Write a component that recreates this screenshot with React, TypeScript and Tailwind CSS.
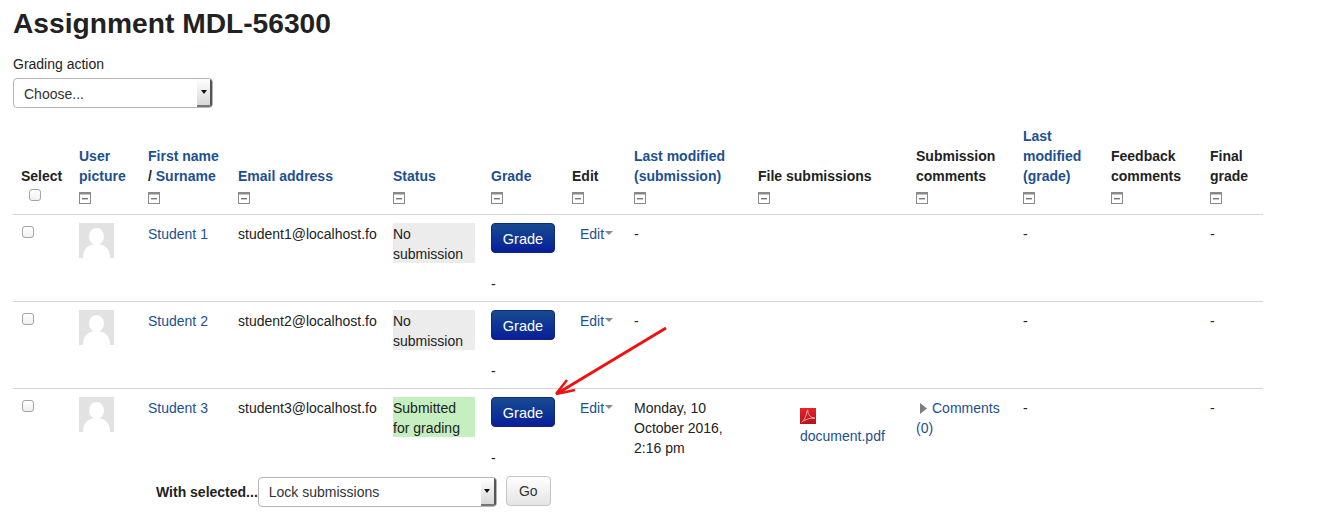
import React from 'react';

const linkClass = 'text-[#1d4f91]';

// widths come from the column left edges in the screenshot
const colWidths = [
  'w-[58px]', 'w-[69px]', 'w-[90px]', 'w-[155px]', 'w-[98px]', 'w-[81px]', 'w-[62px]',
  'w-[124px]', 'w-[158px]', 'w-[107px]', 'w-[88px]', 'w-[99px]', 'w-[61px]',
];

const CollapseIcon = () => (
  <svg width="12" height="12" viewBox="0 0 12 12" className="block mt-[6px]">
    <rect x="0.5" y="0.5" width="11" height="11" fill="#fff" stroke="#8a8a8a" />
    <rect x="0.5" y="0.5" width="11" height="2" fill="#8a8a8a" />
    <rect x="3" y="6" width="6" height="1.4" fill="#777" />
  </svg>
);

const Checkbox = ({ className = '' }: { className?: string }) => (
  <span className={`block w-[12px] h-[12px] rounded-[3px] border border-[#a3a3a3] bg-gradient-to-b from-white to-[#f0f0f0] ${className}`} />
);

const Avatar = () => (
  <svg width="35" height="35" viewBox="0 0 35 35" className="block">
    <rect width="35" height="35" fill="#e2e2e2" />
    <ellipse cx="17.5" cy="13.5" rx="7.5" ry="8.5" fill="#fff" />
    <path d="M4 35c0-9 5-14 13.5-14S31 26 31 35z" fill="#fff" />
  </svg>
);

const PdfIcon = () => (
  <svg width="16" height="16" viewBox="0 0 16 16" className="block">
    <defs>
      <linearGradient id="pdfRed" x1="0" y1="0" x2="0" y2="1">
        <stop offset="0" stopColor="#e8232a" />
        <stop offset="1" stopColor="#b5121b" />
      </linearGradient>
    </defs>
    <rect width="16" height="16" fill="url(#pdfRed)" />
    <path d="M1.500 14.500C4 12.500 6.500 8 7 3c.2-1.400 1-1 .9.3C7.700 6 10 9.500 15 10.200c-4-.6-9 1-11.500 3" fill="none" stroke="#f3c4c4" strokeWidth="0.8" />
  </svg>
);

const SelectBox = ({ label, width, textLeading = 'leading-[29px]' }: { label: string; width: string; textLeading?: string }) => (
  <div className={`${width} h-[30px] flex bg-white border border-[#b5b5b5] rounded-[4px] overflow-hidden`}>
    <span className={`flex-1 pl-[10px] text-[14px] text-[#333] ${textLeading}`}>{label}</span>
    <span className="w-[15px] flex items-center justify-center bg-gradient-to-b from-white to-[#d8d8d8] border-r-2 border-b-2 border-r-[#555] border-b-[#777]">
      <svg width="6" height="4" viewBox="0 0 6 4"><path d="M0 0h6L3 4z" fill="#111" /></svg>
    </span>
  </div>
);

const GradeButton = () => (
  <span className="block w-[64px] h-[30px] rounded-[4px] border border-[#0d2a77] bg-gradient-to-b from-[#1a4a90] to-[#0c1a9a] text-white text-center leading-[31px] text-[14.500px]">
    Grade
  </span>
);

const Caret = () => (
  <svg width="8" height="4" viewBox="0 0 8 4" className="inline-block ml-[1px] mb-[5px]">
    <path d="M0 0h8L4 4z" fill="#8a8a8a" />
  </svg>
);

const headers: { lines: React.ReactNode[]; link?: boolean; select?: boolean }[] = [
  { lines: ['Select'], select: true },
  { lines: ['User', 'picture'], link: true },
  { lines: ['First name', <><span className="text-[#222]">/</span> Surname</>], link: true },
  { lines: ['Email address'], link: true },
  { lines: ['Status'], link: true },
  { lines: ['Grade'], link: true },
  { lines: ['Edit'] },
  { lines: ['Last modified', '(submission)'], link: true },
  { lines: ['File submissions'] },
  { lines: ['Submission', 'comments'] },
  { lines: ['Last', 'modified', '(grade)'], link: true },
  { lines: ['Feedback', 'comments'] },
  { lines: ['Final', 'grade'] },
];

const students = [
  { name: 'Student 1', email: 'student1@localhost.fo', status: ['No', 'submission'], statusBg: 'bg-[#ececec]', submitted: false },
  { name: 'Student 2', email: 'student2@localhost.fo', status: ['No', 'submission'], statusBg: 'bg-[#ececec]', submitted: false },
  { name: 'Student 3', email: 'student3@localhost.fo', status: ['Submitted', 'for grading'], statusBg: 'bg-[#c5efc0]', submitted: true },
];

export default function App() {
  return (
    <div className="relative w-[1343px] h-[517px] overflow-hidden bg-white text-[14px] leading-[20px] text-[#222] font-['Liberation_Sans',Arial,sans-serif]">
      <div className="pl-[13px]">
        <h2 className="pt-[5px] text-[28.200px] leading-[36px] font-bold text-[#222]">Assignment MDL-56300</h2>
        <div className="mt-[13px]">Grading action</div>
        <div className="mt-[4px]">
          <SelectBox label="Choose..." width="w-[200px]" textLeading="leading-[31px]" />
        </div>

        <table className="mt-[18px] table-fixed border-collapse w-[1250px]">
          <colgroup>
            {colWidths.map((w, i) => <col key={i} className={w} />)}
          </colgroup>
          <thead>
            <tr className="border-b border-[#d6d6d6]">
              {headers.map((h, i) => (
                <th key={i} className={`align-bottom text-left font-bold px-[8px] pt-0 ${h.select ? 'pb-[13px]' : 'pb-[10px]'}`}>
                  {h.lines.map((l, j) => (
                    <div key={j} className={`whitespace-nowrap ${h.link ? linkClass : ''}`}>{l}</div>
                  ))}
                  {h.select ? <Checkbox className="ml-[8px] mt-[3px]" /> : <CollapseIcon />}
                </th>
              ))}
            </tr>
          </thead>
          <tbody>
            {students.map((s, idx) => (
              <tr key={s.name} className={idx < 2 ? 'border-b border-[#d6d6d6]' : ''}>
                <td className="align-top px-[8px] pt-[11px]"><Checkbox className="ml-[1px]" /></td>
                <td className="align-top px-[8px] pt-[8px]"><Avatar /></td>
                <td className={`align-top px-[8px] pt-[9px] ${linkClass}`}>{s.name}</td>
                <td className="align-top px-[8px] pt-[9px] whitespace-nowrap">{s.email}</td>
                <td className="align-top pl-[8px] pr-[8px] pt-[8px] text-[#222]">
                  <div className={`h-[40px] pt-[1px] ${s.statusBg}`}>
                    {s.status.map((l) => <div key={l}>{l}</div>)}
                  </div>
                </td>
                <td className="align-top px-[8px] pt-[8px] pb-[7px]">
                  <GradeButton />
                  <div className="mt-[21px]">-</div>
                </td>
                <td className={`align-top pl-[16px] pt-[9px] whitespace-nowrap ${linkClass}`}>Edit<Caret /></td>
                <td className="align-top px-[8px] pt-[9px]">
                  {s.submitted ? (
                    <>Monday, 10<br />October 2016,<br />2:16 pm</>
                  ) : '-'}
                </td>
                <td className="align-top pl-[50px] pt-[9px]">
                  {s.submitted && (
                    <div className="pt-[10px]">
                      <PdfIcon />
                      <div className={`mt-[2px] ${linkClass}`}>document.pdf</div>
                    </div>
                  )}
                </td>
                <td className={`align-top px-[8px] pt-[9px] ${linkClass}`}>
                  {s.submitted && (
                    <>
                      <svg width="7" height="11" viewBox="0 0 7 11" className="inline-block ml-[4px] mr-[5px] -mt-[2px]"><path d="M0 0l7 5.500L0 11z" fill="#7d7d7d" /></svg>
                      Comments
                      <br />(0)
                    </>
                  )}
                </td>
                <td className="align-top px-[8px] pt-[9px]">-</td>
                <td className="align-top px-[8px] pt-[9px]" />
                <td className="align-top px-[8px] pt-[9px]">-</td>
              </tr>
            ))}
          </tbody>
        </table>

        <div className="flex items-start ml-[143px] mt-[2px]">
          <span className="font-bold leading-[30px]">With selected...</span>
          <SelectBox label="Lock submissions" width="w-[239px]" />
          <span className="ml-[9px] -mt-[1px] w-[45px] h-[30px] rounded-[4px] border border-[#c4c4c4] bg-gradient-to-b from-white to-[#e4e4e4] text-center leading-[28px] text-[#333]">Go</span>
        </div>
      </div>

      {/* annotation arrow drawn over the table */}
      <svg className="absolute left-0 top-0 pointer-events-none" width="1343" height="517" viewBox="0 0 1343 517">
        <path d="M666 328L558 393" stroke="#ee1111" strokeWidth="3" fill="none" />
        <path d="M556 394l11-14M556 394l19-4" stroke="#ee1111" strokeWidth="2.500" fill="none" />
      </svg>
    </div>
  );
}
